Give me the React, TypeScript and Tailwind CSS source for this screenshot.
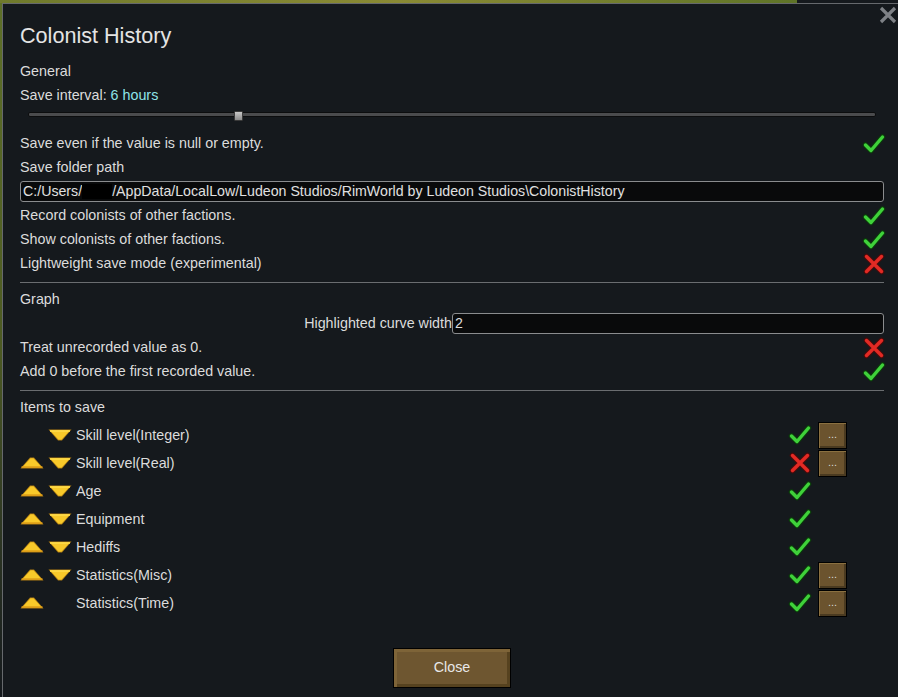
import type { ReactNode } from "react";

const font = { fontFamily: '"Liberation Sans", Arial, sans-serif' };

function Check() {
  return (
    <svg width="24" height="22" viewBox="0 0 24 22" className="block">
      <path d="M3.5 12 L9 17.5 L20.5 4" fill="none" stroke="#0b3a0b" strokeWidth="5.5" strokeLinecap="round" strokeLinejoin="round" />
      <path d="M3.5 12 L9 17.5 L20.5 4" fill="none" stroke="#3fd13a" strokeWidth="3.4" strokeLinecap="round" strokeLinejoin="round" />
    </svg>
  );
}

function Cross() {
  return (
    <svg width="24" height="22" viewBox="0 0 24 22" className="block">
      <path d="M4.5 3.5 L19.5 18.5 M19.5 3.5 L4.5 18.5" fill="none" stroke="#4a0b0b" strokeWidth="5.5" strokeLinecap="round" />
      <path d="M4.5 3.5 L19.5 18.5 M19.5 3.5 L4.5 18.5" fill="none" stroke="#e22a24" strokeWidth="3.4" strokeLinecap="round" />
    </svg>
  );
}

function ArrowUp() {
  return (
    <svg width="24" height="12" viewBox="0 0 24 12" className="block">
      <polygon points="0.5,11.5 10,0.5 14,0.5 23.5,11.5" fill="#b07d12" />
      <polygon points="2,10.5 10.5,1.3 13.5,1.3 22,10.5" fill="#f8c92a" />
      <rect x="1.5" y="9.3" width="21" height="1.6" fill="#dc9c17" />
    </svg>
  );
}

function ArrowDown() {
  return (
    <svg width="24" height="12" viewBox="0 0 24 12" className="block">
      <polygon points="0.5,0.5 23.5,0.5 14,11.5 10,11.5" fill="#b07d12" />
      <polygon points="1.8,1.2 22.2,1.2 13.5,10.7 10.5,10.7" fill="#f8c92a" />
      <rect x="2" y="1.2" width="20" height="1.6" fill="#ffdb4a" />
    </svg>
  );
}

function DotsButton() {
  return (
    <div className="flex h-[27px] w-[29px] items-center justify-center border border-black bg-[#6b532e] pb-[2px] text-[11px] leading-none text-[#d8d8d8] shadow-[inset_1px_1px_0_#8a7040,inset_-2px_-2px_0_#4a3a20]">
      ...
    </div>
  );
}

function Row({ children, right }: { children: ReactNode; right?: ReactNode }) {
  return (
    <div className="flex h-6 items-center justify-between pt-[1px]">
      <div>{children}</div>
      {right && <div className="-mr-[2px]">{right}</div>}
    </div>
  );
}

function Separator() {
  return (
    <div className="h-3 pt-[7px]">
      <div className="h-px bg-[#6a6d70]" />
    </div>
  );
}

const items = [
  { label: "Skill level(Integer)", up: false, down: true, on: true, dots: true },
  { label: "Skill level(Real)", up: true, down: true, on: false, dots: true },
  { label: "Age", up: true, down: true, on: true, dots: false },
  { label: "Equipment", up: true, down: true, on: true, dots: false },
  { label: "Hediffs", up: true, down: true, on: true, dots: false },
  { label: "Statistics(Misc)", up: true, down: true, on: true, dots: true },
  { label: "Statistics(Time)", up: true, down: false, on: true, dots: true },
];

export default function App() {
  return (
    <div className="flex h-[697px] w-[898px] flex-col overflow-hidden bg-[#15191d] text-[14.3px] text-[#dcdcdc]" style={font}>
      <div className="flex h-[3px] shrink-0">
        <div className="w-[797px] bg-gradient-to-r from-[#6f7a2c] via-[#8a8a34] to-[#5f7428]" />
        <div className="flex-1 bg-[#15191d]" />
      </div>
      <div className="flex flex-1">
        <div className="w-[2px] bg-gradient-to-b from-[#5e7028] via-[#4c5a22] to-[#15191d]" />
        <div className="relative flex flex-1 flex-col border-l border-t border-[#66696d] pl-[17px] pr-[14px]">
          <div className="absolute right-[1px] top-[2px]">
            <svg width="18" height="18" viewBox="0 0 18 18">
              <path d="M2 2 L16 16 M16 2 L2 16" stroke="#7e8186" strokeWidth="3.2" />
            </svg>
          </div>

          <div className="flex h-[55px] items-end pb-[7px] text-[21.6px] text-[#e4e4e4]">Colonist History</div>

          <Row>General</Row>
          <Row>
            Save interval: <span className="text-[#8ee4e8]">6 hours</span>
          </Row>
          <div className="relative h-6 pl-[8px] pr-[8px] pt-[5px]">
            <div className="h-[5px] rounded-[2px] border border-[#0c0d0e] bg-[#4a4b4d]" />
            <div className="absolute left-[214px] top-[4px] h-[10px] w-[9px] rounded-[1px] border border-[#3a3a3a] bg-gradient-to-b from-[#c8c8c8] to-[#8c8c8c]" />
          </div>

          <Row right={<Check />}>Save even if the value is null or empty.</Row>
          <Row>Save folder path</Row>
          <div className="flex h-6 items-center">
            <div className="flex h-[21px] w-full items-center rounded-[3px] border border-[#8a8c8e] bg-[#090a0b] px-[2px] pt-[1px] text-[14.2px] text-[#e0e0e0]">
              C:/Users/<span className="inline-block h-[15px] w-[30px] bg-black" />/AppData/LocalLow/Ludeon Studios/RimWorld by Ludeon Studios\ColonistHistory
            </div>
          </div>
          <Row right={<Check />}>Record colonists of other factions.</Row>
          <Row right={<Check />}>Show colonists of other factions.</Row>
          <Row right={<Cross />}>Lightweight save mode (experimental)</Row>

          <Separator />
          <Row>Graph</Row>
          <div className="flex h-6 items-center pt-[1px]">
            <div className="flex-1 text-right">Highlighted curve width</div>
            <div className="flex h-[21px] w-[432px] items-center rounded-[3px] border border-[#8a8c8e] bg-[#090a0b] px-[2px] pt-[1px] text-[14.2px]">
              2
            </div>
          </div>
          <Row right={<Cross />}>Treat unrecorded value as 0.</Row>
          <Row right={<Check />}>Add 0 before the first recorded value.</Row>

          <Separator />
          <Row>Items to save</Row>
          <div className="flex flex-col pt-[2px]">
            {items.map((item) => (
              <div key={item.label} className="flex h-7 items-center">
                <div className="w-[28px]">{item.up && <ArrowUp />}</div>
                <div className="w-[28px]">{item.down && <ArrowDown />}</div>
                <div className="flex-1 pt-[1px]">{item.label}</div>
                <div className="mr-[6px]">{item.on ? <Check /> : <Cross />}</div>
                <div className="mr-[37px] w-[29px]">{item.dots && <DotsButton />}</div>
              </div>
            ))}
          </div>

          <div className="flex justify-center pt-[31px]">
            <div className="flex h-[40px] w-[118px] items-center justify-center border border-black bg-[#6e5630] text-[14.3px] text-[#e8e8e8] shadow-[inset_3px_3px_0_#7e6438,inset_-3px_-3px_0_#56421f]">
              Close
            </div>
          </div>
        </div>
      </div>
    </div>
  );
}
